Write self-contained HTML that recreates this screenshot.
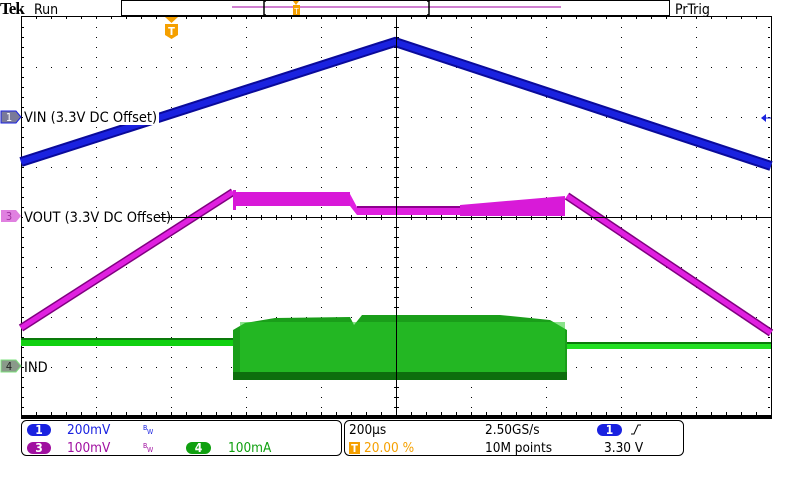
<!DOCTYPE html>
<html><head><meta charset="utf-8"><style>
html,body{margin:0;padding:0;background:#fff;width:800px;height:480px;overflow:hidden}
svg{display:block}
text{font-family:"DejaVu Sans Condensed","DejaVu Sans","Liberation Sans",sans-serif}
</style></head><body>
<svg width="800" height="480" viewBox="0 0 800 480" xmlns="http://www.w3.org/2000/svg">
<rect width="800" height="480" fill="#fff"/>
<!-- header -->
<text x="0" y="14" font-weight="bold" font-size="17" fill="#000" style="font-family:'Liberation Serif',serif" letter-spacing="-1">Tek</text>
<text x="34" y="14" font-size="14" fill="#000">Run</text>
<rect x="121.5" y="0.5" width="548" height="15" fill="#fff" stroke="#000"/>
<line x1="232" y1="7" x2="561" y2="7" stroke="#a000a0" stroke-width="1"/>
<path d="M266 1 h-2 v14 h2" fill="none" stroke="#000" stroke-width="1.5"/>
<path d="M427 1 h2 v14 h-2" fill="none" stroke="#000" stroke-width="1.5"/>
<path d="M293 1 h6 l-3 4z" fill="#f5a000"/>
<rect x="293" y="5" width="7" height="10" fill="#f5a000"/>
<text x="296.5" y="14" font-size="8" fill="#fff" text-anchor="middle">T</text>
<text x="675" y="14" font-size="14" fill="#000">PrTrig</text>
<!-- grid -->
<line x1="21" y1="16.5" x2="772" y2="16.5" stroke="#000"/>
<line x1="21.5" y1="16" x2="21.5" y2="418" stroke="#000"/>
<line x1="771.5" y1="16" x2="771.5" y2="418" stroke="#000"/>
<rect x="21" y="415" width="751" height="4" fill="#000"/>
<g fill="#000"><g id="vd"></g></g>
<script>
(function(){
var ns="http://www.w3.org/2000/svg",g=document.getElementById('vd');
function d(x,y,w,h){var r=document.createElementNS(ns,'rect');r.setAttribute('x',x);r.setAttribute('y',y);r.setAttribute('width',w||1);r.setAttribute('height',h||1);g.appendChild(r);}
for(var i=1;i<10;i++){var x=21+75*i;if(i==5)continue;for(var y=27;y<416;y+=10)d(x,y);}
for(var j=1;j<8;j++){var y=17+50*j;if(j==4)continue;for(var x=36;x<771;x+=15)d(x,y);}
for(var x=36;x<771;x+=15){d(x,17,1,2);d(x,412,1,3);d(x,215,1,5);}
for(var y=27;y<416;y+=10){d(22,y,2,1);d(768,y,2,1);d(394,y,5,1);}
})();
</script>
<!-- VIN blue -->
<polyline points="21,162 395,42 771,166" fill="none" stroke="#0a0a9a" stroke-width="10"/>
<polyline points="21,162 395,42 771,166" fill="none" stroke="#1a22e0" stroke-width="6"/>
<!-- VOUT magenta -->
<polyline points="21,328 233,192" fill="none" stroke="#800080" stroke-width="8"/>
<polyline points="21,328 233,192" fill="none" stroke="#e020e0" stroke-width="5"/>
<rect x="233" y="192" width="117" height="14" fill="#d818d8"/>
<rect x="233" y="190" width="3" height="20" fill="#d818d8"/>
<polygon points="350,194 357,207 460,207 460,215 357,215 350,206" fill="#e020e0"/>
<rect x="357" y="206" width="105" height="9" fill="#e020e0"/>
<rect x="357" y="206" width="105" height="2" fill="#900090"/>
<polygon points="460,205 565,196 565,216 460,216" fill="#d81ad8"/>
<polyline points="567,196 771,333" fill="none" stroke="#800080" stroke-width="8"/>
<polyline points="567,196 771,333" fill="none" stroke="#e020e0" stroke-width="5"/>
<!-- IND green -->
<rect x="21" y="338" width="212" height="8" fill="#10d010"/>
<rect x="21" y="338" width="212" height="2" fill="#0a7a0a"/>
<rect x="567" y="342" width="204" height="7" fill="#20e020"/>
<rect x="567" y="342" width="204" height="2" fill="#0a7a0a"/>
<polygon points="233,330 245,323 275,318 350,317 354,325 362,315 500,315 550,320 567,330 567,380 233,380" fill="#1a9e1a"/>
<rect x="240" y="322" width="325" height="50" fill="#2ccc2c" opacity="0.55"/>
<rect x="233" y="372" width="334" height="8" fill="#0d6e0d"/>
<!-- center lines -->
<line x1="396.5" y1="16" x2="396.5" y2="416" stroke="#000"/>
<line x1="21" y1="217.5" x2="771" y2="217.5" stroke="#000"/>
<!-- trigger marker -->
<path d="M165 17 h13 l-6.5 6z" fill="#f5a000"/>
<path d="M165 24 h13 v11 l-6.5 4 l-6.5 -4z" fill="#f5a000"/>
<text x="171.5" y="35" font-size="11" fill="#fff" text-anchor="middle" font-weight="bold">T</text>
<path d="M761 118 l5 -4 v8z" fill="#1a22e0"/>
<line x1="765" y1="118" x2="771" y2="118" stroke="#1a22e0"/>
<!-- channel markers -->
<path d="M1 111 h15 l5 6 l-5 6 h-15z" fill="#7a7a9a" stroke="#1a22e0"/>
<text x="9" y="121" font-size="11" fill="#fff" text-anchor="middle">1</text>
<rect x="23" y="108" width="136" height="17" fill="#fff"/>
<text x="24" y="122" font-size="14.5" fill="#000">VIN (3.3V DC Offset)</text>
<path d="M1 210 h15 l5 6 l-5 6 h-15z" fill="#e080e0"/>
<text x="9" y="220" font-size="11" fill="#a030a0" text-anchor="middle">3</text>
<rect x="23" y="208" width="142" height="17" fill="#fff"/>
<line x1="160" y1="217.5" x2="166" y2="217.5" stroke="#000"/>
<text x="24" y="222" font-size="14.5" fill="#000">VOUT (3.3V DC Offset)</text>
<path d="M1 360 h15 l5 6 l-5 6 h-15z" fill="#8a9a8a" stroke="#7ee07e"/>
<text x="9" y="370" font-size="11" fill="#222" text-anchor="middle">4</text>
<text x="24" y="372" font-size="14.5" fill="#000">IND</text>
<!-- bottom panel -->
<rect x="21.5" y="420.5" width="320" height="35" rx="5" fill="#fff" stroke="#000"/>
<rect x="344.5" y="420.5" width="339" height="35" rx="5" fill="#fff" stroke="#000"/>
<rect x="27" y="424" width="24" height="12" rx="6" fill="#1a22e0"/>
<text x="39" y="434" font-size="12" fill="#fff" text-anchor="middle" font-weight="bold">1</text>
<text x="67" y="434" font-size="13.5" fill="#1a22e0">200mV</text>
<text x="143" y="430" font-size="7" fill="#1a22e0">B</text><text x="147" y="434" font-size="7" fill="#1a22e0">W</text>
<rect x="27" y="442" width="24" height="12" rx="6" fill="#a010a0"/>
<text x="39" y="452" font-size="12" fill="#fff" text-anchor="middle" font-weight="bold">3</text>
<text x="67" y="452" font-size="13.5" fill="#a010a0">100mV</text>
<text x="143" y="448" font-size="7" fill="#a010a0">B</text><text x="147" y="452" font-size="7" fill="#a010a0">W</text>
<rect x="186" y="442" width="25" height="12" rx="6" fill="#10a010"/>
<text x="198.5" y="452" font-size="12" fill="#fff" text-anchor="middle" font-weight="bold">4</text>
<text x="228" y="452" font-size="13.5" fill="#10a010">100mA</text>
<text x="349" y="434" font-size="13.5" fill="#000">200µs</text>
<rect x="349" y="442" width="11" height="12" fill="#f5a000"/>
<text x="354.5" y="452" font-size="11" fill="#fff" text-anchor="middle" font-weight="bold">T</text>
<text x="364" y="452" font-size="13.5" fill="#f5a000">20.00 %</text>
<text x="485" y="434" font-size="13.5" fill="#000">2.50GS/s</text>
<text x="485" y="452" font-size="13.5" fill="#000">10M points</text>
<rect x="597" y="424" width="25" height="12" rx="6" fill="#1a22e0"/>
<text x="609.5" y="434" font-size="12" fill="#fff" text-anchor="middle" font-weight="bold">1</text>
<path d="M631 434 h3 l4 -9 h3" fill="none" stroke="#000"/>
<text x="604" y="452" font-size="13.5" fill="#000">3.30 V</text>
</svg>
</body></html>
